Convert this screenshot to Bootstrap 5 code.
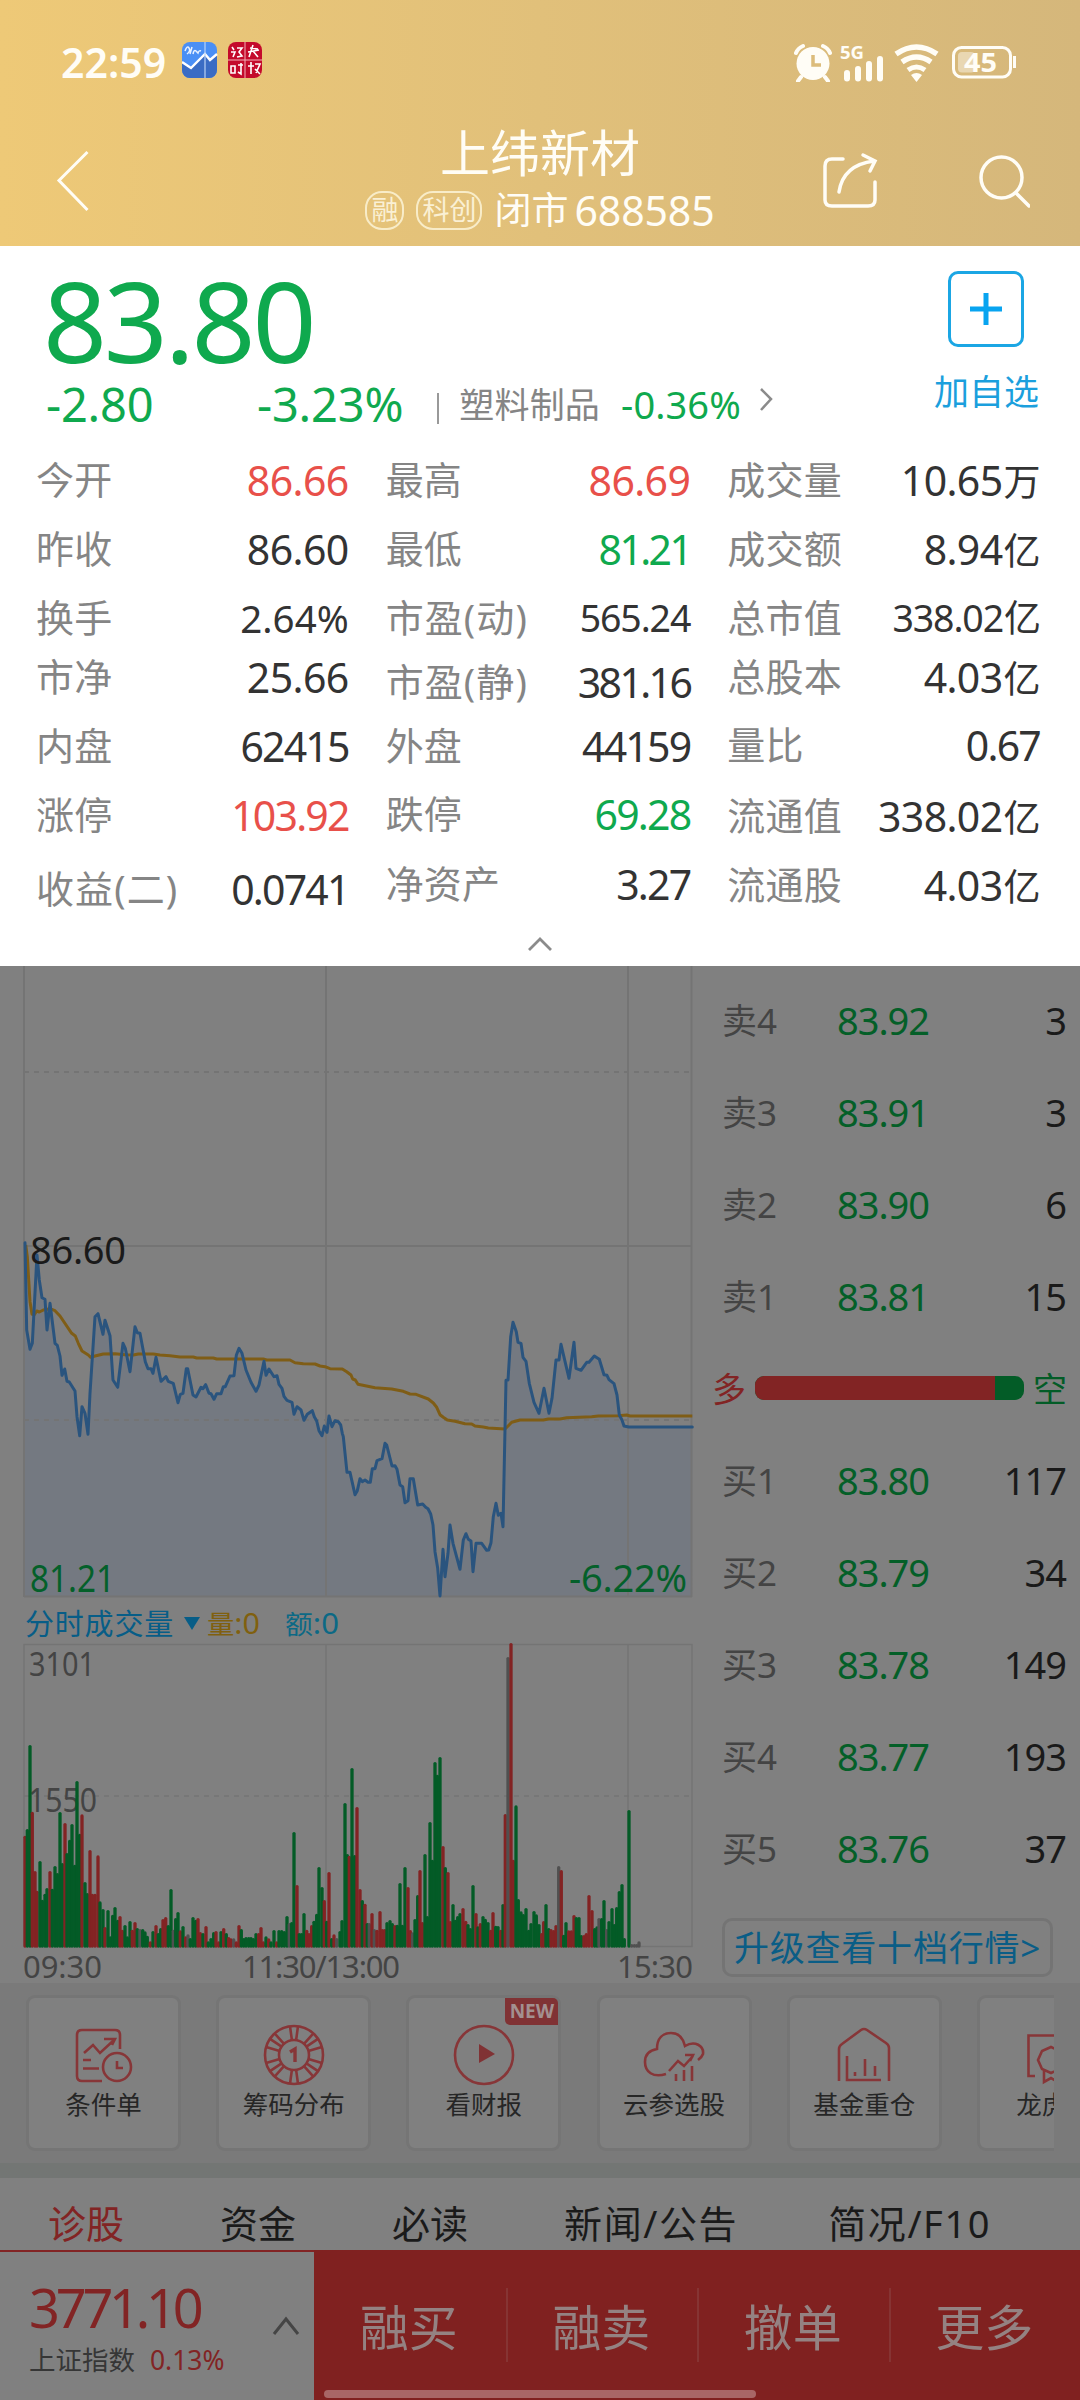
<!DOCTYPE html>
<html lang="zh-CN">
<head>
<meta charset="utf-8">
<meta name="viewport" content="width=device-width, initial-scale=1">
<title>上纬新材 688585</title>
<link rel="stylesheet" href="https://cdn.jsdelivr.net/npm/bootstrap@5.3.0/dist/css/bootstrap.min.css">
<style>
  body{width:1080px;height:2400px;overflow:hidden;background:#808080;font-family:"Noto Sans","Noto Sans CJK SC",sans-serif;line-height:1;color:#333}
  svg{display:block;flex:none}
  svg text{font-family:"Noto Sans","Noto Sans CJK SC",sans-serif}
  .hd{height:246px;background:linear-gradient(90deg,#eec977,#e1c07a 50%,#d5b77b);color:#fffdf6}
  .status-line{height:84px;padding:42px 60px 0 61px}
  .clock{font-size:41px;font-weight:600;letter-spacing:0}
  .nav-line{height:162px;padding:0 50px 0 56px}
  .nav-ico{margin-top:64px}
  .title-box{width:360px;margin-left:270px;padding-top:42px}
  .stock-name{font-size:50px;line-height:54px}
  .sub-line{height:42px;gap:12px;margin-top:9px}
  .tag-pill{border:2px solid #f8ecc8;border-radius:17px;height:39px;font-size:27px;line-height:34px;padding:0 4px;color:#faf0d4}
  .state{font-size:37px;line-height:40px}
  .code{font-size:41px;line-height:40px;letter-spacing:-.1px;margin-left:-6px}
  .quote{height:720px;background:#fff}
  .q-top{height:199px;padding:0 41px 0 46px}
  .big-price{font-size:112px;line-height:112px;height:112px;margin:18px 0 0 -3px;letter-spacing:-3.2px}
  .grn{color:#0fa94e}.rd{color:#e8504a}
  .chg{font-size:47px;letter-spacing:-.2px}
  .chg-first{width:211px}
  .chg-line{height:46px;margin-top:5px}
  .sector{font-size:35px;color:#858585;margin-left:20px;letter-spacing:.2px}
  .sector-chg{font-size:38px;margin-left:21px;letter-spacing:.1px}
  .bar-v{width:2px;height:31px;background:#999;margin:8px 0 0 34px}
  .add-box{width:76px;height:76px;border:3px solid #1ba6e4;border-radius:10px;margin-top:25px}
  .add-txt{font-size:35px;color:#1b9fdd;margin-top:27px}
  .grid3{padding:10px 40px 0 37px;gap:38px;height:473px}
  .c1{width:312px}.c2{width:304px}.c3{width:312px}
  .kv{height:50px;font-size:41px;letter-spacing:-.6px;white-space:nowrap}
  .kv span:first-child{font-size:38px;color:#858585;letter-spacing:.2px;padding-bottom:2px;margin-left:-1px}
  .kv .paren{letter-spacing:1.1px!important}
  .kv em{font-style:normal;font-size:37px;margin-left:1px}
  .kv .tight{font-size:37.5px;letter-spacing:-1.1px}
  .kv .tighter{letter-spacing:-1.8px}
  .kv .tightest{letter-spacing:-2.6px}
  .kv .mid{font-size:38.5px;letter-spacing:0}
  .kv+.kv{margin-top:19px}
  .c1 .kv:nth-child(4){margin-top:9px}.c1 .kv:nth-child(7){margin-top:24px}
  .c2 .kv:nth-child(4),.c2 .kv:nth-child(5){margin-top:14px}.c2 .kv:nth-child(6){margin-top:18px}.c2 .kv:nth-child(7){margin-top:20px}
  .c3 .kv:nth-child(4){margin-top:9px}.c3 .kv:nth-child(5){margin-top:18px}.c3 .kv:nth-child(6){margin-top:21px}
  .fold{padding-top:18px}
  .market{height:1017px}
  .chart-col{width:706px}
  .vol-head{height:44px;padding:3px 26px 0 25px;font-size:29px;color:#075d87}
  .vol-head .nm{letter-spacing:.8px}
  .tri{margin:0 7px 0 10px}
  .book{width:374px;padding:8px 13px 0 16px}
  .lv{height:92px;font-size:38px;color:#1a1a1a}
  .lv .lb{width:100px;font-size:35px;color:#444}
  .lv .pr{width:122px;color:#045f28;letter-spacing:-1px}
  .lv .qt{width:123px;letter-spacing:-1px;margin-left:-1px}
  .bs-row{height:92px;margin-left:-10px}
  .bs-row .side{font-size:34px;width:34px;flex:none;padding-top:2px}
  .bear{color:#035c27}
  .bs-bar{width:269px;height:24px;border-radius:9px;overflow:hidden;background:#035c27}
  .bs-bar div{width:240px;background:#822424}
  .up-btn{width:331px;height:59px;border:3px solid #747474;border-radius:10px;margin-top:24px;font-size:35px;color:#0a5d86;letter-spacing:.8px}
  .tools{height:180px;background:#7a7a7a;padding:12px 26px 0 26px}
  .tools-in{gap:35.2px;overflow:hidden}
  .tool{flex:none;width:155px;height:156px;border:3px solid #757575;border-radius:9px;background:#808080;font-size:25.5px;color:#262626}
  .tool svg{margin-top:26px}
  .tool .cap-t{margin-top:6px;white-space:nowrap}
  .new-tag{right:0;top:0;width:53px;height:27px;background:#803234;color:#a39090;font-size:19px;font-weight:700;border-radius:0 5px 0 5px;line-height:27px}
  .sep{height:15px;background:#737674}
  .tabs{height:72px;font-size:38px;color:#1a1a1a;padding:17px 0 0 48px;gap:96px;white-space:nowrap}
  .wide-t{letter-spacing:1.6px;margin-right:-6px}
  .dk-red{color:#822424}
  .ft{height:150px}
  .idx{width:315px;border-top:2px solid #822424;padding:0 14px 0 29px}
  .idx-v{font-size:54px;letter-spacing:-4.2px;line-height:54px;margin-top:28px}
  .idx-n{font-size:26.5px;line-height:30px;margin-top:11px;color:#363636;white-space:nowrap}
  .acts{background:#802120;color:#948282;font-size:49px}
  .act{width:191.5px;height:74px;padding:4px 2px 0 0}
  .act+.act{border-left:2px solid #863433}
  .home-bar{left:324px;top:2390px;width:432px;height:8px;border-radius:4px;background:#a86666}
</style>
</head>
<body>
<header class="hd">
  <div class="status-line d-flex align-items-start">
    <span class="clock">22:59</span>
    <svg class="ms-3 me-1" width="36" height="36" viewBox="0 0 36 36"><rect width="35" height="36" rx="8" fill="#4a8ff5"/><path d="M0 20 9 27 23 12 29 18 35 12V28a8 8 0 0 1-8 8H8a8 8 0 0 1-8-8Z" fill="#3a6cc4"/><path d="M0 20 9 26 23 12 28 18 35 12" fill="none" stroke="#fff" stroke-width="2.4"/><path d="M23 0V36" stroke="#b9d2f5" stroke-width="1.2"/><path d="M3 9q2-6 4-3t-2 6M8 12l2-7M11 12q1-5 3-3t2 2q1-3 3-2" fill="none" stroke="#e8f1ff" stroke-width="1.5"/></svg>
    <svg class="ms-1" width="36" height="36" viewBox="0 0 36 36"><rect x="2" width="34" height="36" rx="8" fill="#c40a2b"/><path d="M19 0V36M2 18H36" stroke="#f0b0b8" stroke-width="1"/><path d="M6 5l2 3M5 10h4l-2 5M11 6h5l-3 4 3 4-5 1M24 6l8 1M22 10l11-2M27 3l-4 12M27 9l5 6M5 24h4v7H5zM12 23h5M15 21v11l-3-2M22 24h6M25 20v12M29 22h5l-4 9M29 27l5 5" fill="none" stroke="#fff" stroke-width="1.6"/></svg>
    <div class="d-flex ms-auto">
      <svg width="226" height="40" viewBox="794 42 226 40" fill="none" stroke="#fffdf6"><circle cx="813" cy="63.500" r="16.500" fill="#fffdf6" stroke="none"/><path d="M796 53q2-5 7-7M830 53q-2-5-7-7M801 77l-3 4M825 77l3 4" stroke-width="4" stroke-linecap="round"/><path d="M813 55v10h8" stroke="#dcbc7b" stroke-width="3.500"/>
        <text x="840" y="59" font-size="17.500" font-weight="700" fill="#fffdf6" stroke="none" textLength="24" lengthAdjust="spacingAndGlyphs">5G</text>
        <path d="M847 73v5.500M858 69v9.500M869 64v14.500M880 59v19.500" stroke-width="6" stroke-linecap="round"/>
        <path d="M896 54q20.500-14 41 0" stroke-width="5.500"/><path d="M902 62q14.500-10 29 0" stroke-width="5.500"/><path d="M908 70q8.500-6 17 0" stroke-width="5"/><path d="M911 75q5.500-4 11 0l-5.500 7z" fill="#fffdf6" stroke="none"/>
        <rect x="953.500" y="47.500" width="57" height="29.500" rx="8" stroke-width="3"/><rect x="958" y="52" width="17" height="20.500" rx="4" fill="#fffdf6" opacity=".45" stroke="none"/><path d="M1014.500 56v12" stroke-width="3"/>
        <text x="964" y="72" font-size="26" font-weight="700" fill="#fffdf6" stroke="none" textLength="33" lengthAdjust="spacingAndGlyphs">45</text></svg>
    </div>
  </div>
  <div class="nav-line d-flex">
    <svg width="34" height="64" viewBox="56 151 34 64" class="nav-ico"><path d="M87.500 155 59 183.500 87.500 213" fill="none" stroke="#fffdf6" stroke-width="3"/></svg>
    <div class="title-box text-center me-auto flex-shrink-0">
      <div class="stock-name">上纬新材</div>
      <div class="sub-line d-flex align-items-center justify-content-center"><span class="tag-pill">融</span><span class="tag-pill">科创</span><span class="state">闭市</span><span class="code">688585</span></div>
    </div>
    <svg width="210" height="64" viewBox="820 151 210 64" class="nav-ico" fill="none" stroke="#fffdf6" stroke-width="3.500" stroke-linecap="round"><path d="M843 162H832q-7 0-7 7V203q0 6 7 6H868q7 0 7-6V185"/><path d="M839 195q4-27 35-31M863 158l12 6-5 10"/><circle cx="1001.500" cy="180.500" r="20.500"/><path d="M1016 196l13 13"/></svg>
  </div>
</header>

<section class="quote">
  <div class="q-top d-flex justify-content-between">
    <div>
      <div class="big-price grn">83.80</div>
      <div class="chg-line d-flex align-items-center">
        <span class="chg chg-first grn">-2.80</span><span class="chg grn">-3.23%</span><span class="bar-v"></span><span class="sector">塑料制品</span><span class="sector-chg grn">-0.36%</span>
        <svg class="ms-3 mb-2" width="20" height="28" viewBox="0 0 20 28"><path d="M4 3 14 13 4 24" fill="none" stroke="#8b8b8b" stroke-width="2.500"/></svg>
      </div>
    </div>
    <div class="d-flex flex-column align-items-center">
      <div class="add-box d-flex align-items-center justify-content-center"><svg width="34" height="34" viewBox="0 0 34 34"><path d="M17 1V33M1 17H33" stroke="#08a4f0" stroke-width="5"/></svg></div>
      <div class="add-txt">加自选</div>
    </div>
  </div>
  <div class="grid3 d-flex">
    <div class="c1">
      <div class="kv d-flex justify-content-between align-items-center"><span>今开</span><span class="rd">86.66</span></div>
      <div class="kv d-flex justify-content-between align-items-center"><span>昨收</span><span>86.60</span></div>
      <div class="kv d-flex justify-content-between align-items-center"><span>换手</span><span class="mid">2.64%</span></div>
      <div class="kv d-flex justify-content-between align-items-center"><span>市净</span><span>25.66</span></div>
      <div class="kv d-flex justify-content-between align-items-center"><span>内盘</span><span class="tighter">62415</span></div>
      <div class="kv d-flex justify-content-between align-items-center"><span>涨停</span><span class="rd tighter">103.92</span></div>
      <div class="kv d-flex justify-content-between align-items-center"><span class="paren">收益(二)</span><span class="tighter">0.0741</span></div>
    </div>
    <div class="c2">
      <div class="kv d-flex justify-content-between align-items-center"><span>最高</span><span class="rd">86.69</span></div>
      <div class="kv d-flex justify-content-between align-items-center"><span>最低</span><span class="grn tightest">81.21</span></div>
      <div class="kv d-flex justify-content-between align-items-center"><span class="paren">市盈(动)</span><span class="tight">565.24</span></div>
      <div class="kv d-flex justify-content-between align-items-center"><span class="paren">市盈(静)</span><span class="tightest">381.16</span></div>
      <div class="kv d-flex justify-content-between align-items-center"><span>外盘</span><span class="tighter">44159</span></div>
      <div class="kv d-flex justify-content-between align-items-center"><span>跌停</span><span class="grn tighter">69.28</span></div>
      <div class="kv d-flex justify-content-between align-items-center"><span>净资产</span><span class="tighter">3.27</span></div>
    </div>
    <div class="c3">
      <div class="kv d-flex justify-content-between align-items-center"><span>成交量</span><span>10.65<em>万</em></span></div>
      <div class="kv d-flex justify-content-between align-items-center"><span>成交额</span><span>8.94<em>亿</em></span></div>
      <div class="kv d-flex justify-content-between align-items-center"><span>总市值</span><span class="tight">338.02<em>亿</em></span></div>
      <div class="kv d-flex justify-content-between align-items-center"><span>总股本</span><span>4.03<em>亿</em></span></div>
      <div class="kv d-flex justify-content-between align-items-center"><span>量比</span><span class="tighter">0.67</span></div>
      <div class="kv d-flex justify-content-between align-items-center"><span>流通值</span><span>338.02<em>亿</em></span></div>
      <div class="kv d-flex justify-content-between align-items-center"><span>流通股</span><span>4.03<em>亿</em></span></div>
    </div>
  </div>
  <div class="fold d-flex justify-content-center"><svg width="26" height="16" viewBox="0 0 26 16"><path d="M2 14 13 3 24 14" fill="none" stroke="#8b8b8b" stroke-width="2.800"/></svg></div>
</section>

<main class="market d-flex">
  <div class="chart-col">
    <svg width="706" height="634" viewBox="0 966 706 634">
      <path id="area" fill="#747981"/>
      <g stroke="#747474" stroke-width="2" fill="none"><path d="M24 966V1597M326 966V1597M628 966V1597M691.500 966V1597M24 1246H692M24 1596.500H692"/><path d="M24 1072H692M24 1420H692" stroke-dasharray="5 5"/></g>
      <path id="avg" fill="none" stroke="#7f5d16" stroke-width="3" stroke-linejoin="round"/>
      <path id="price" fill="none" stroke="#2a547e" stroke-width="3" stroke-linejoin="round" stroke-linecap="round"/>
      <g font-size="38"><text x="30" y="1263.500" fill="#1a1a1a" textLength="96">86.60</text><g fill="#04602a"><text x="30" y="1591.500" textLength="85" lengthAdjust="spacingAndGlyphs">81.21</text><text x="569" y="1591.500" textLength="118">-6.22%</text></g></g>
    </svg>
    <div class="vol-head d-flex align-items-center">
      <span class="nm">分时成交量</span>
      <svg class="tri" width="16" height="14" viewBox="0 0 16 14"><path d="M0 0H16L8 13Z" fill="#075d87"/></svg>
      <svg width="150" height="34" viewBox="208 1607 150 34" font-size="29"><text x="208" y="1634" fill="#80600f" textLength="53" lengthAdjust="spacingAndGlyphs"><tspan font-size="26">量</tspan>:0</text><text x="286" y="1634" fill="#0c6985" textLength="54" lengthAdjust="spacingAndGlyphs"><tspan font-size="26">额</tspan>:0</text></svg>
    </div>
    <svg width="706" height="339" viewBox="0 1644 706 339" overflow="visible">
      <g stroke="#747474" stroke-width="1.500" fill="none"><path d="M24 1644.500H692V1946.500H24ZM326 1644V1946M628 1644V1946"/><path d="M24 1796H692" stroke-dasharray="5 5"/></g>
      <g fill="#444" font-size="32.500"><text x="29" y="1675.500" textLength="66" lengthAdjust="spacingAndGlyphs">3101</text><text x="28" y="1811.500" textLength="69" lengthAdjust="spacingAndGlyphs">1550</text></g>
      <g id="bars" stroke-width="3.300" stroke-linecap="round"></g>
      <g fill="#444" font-size="31"><text x="23" y="1978" textLength="79">09:30</text><text x="242" y="1978" textLength="158">11:30/13:00</text><text x="617" y="1978" textLength="76">15:30</text></g>
    </svg>
  </div>
  <aside class="book">
    <div class="lv d-flex align-items-center"><span class="lb">卖4</span><span class="pr text-center">83.92</span><span class="qt text-end">3</span></div>
    <div class="lv d-flex align-items-center"><span class="lb">卖3</span><span class="pr text-center">83.91</span><span class="qt text-end">3</span></div>
    <div class="lv d-flex align-items-center"><span class="lb">卖2</span><span class="pr text-center">83.90</span><span class="qt text-end">6</span></div>
    <div class="lv d-flex align-items-center"><span class="lb">卖1</span><span class="pr text-center">83.81</span><span class="qt text-end">15</span></div>
    <div class="bs-row d-flex align-items-center justify-content-between"><span class="side dk-red">多</span><div class="bs-bar d-flex"><div></div></div><span class="side bear">空</span></div>
    <div class="lv d-flex align-items-center"><span class="lb">买1</span><span class="pr text-center">83.80</span><span class="qt text-end">117</span></div>
    <div class="lv d-flex align-items-center"><span class="lb">买2</span><span class="pr text-center">83.79</span><span class="qt text-end">34</span></div>
    <div class="lv d-flex align-items-center"><span class="lb">买3</span><span class="pr text-center">83.78</span><span class="qt text-end">149</span></div>
    <div class="lv d-flex align-items-center"><span class="lb">买4</span><span class="pr text-center">83.77</span><span class="qt text-end">193</span></div>
    <div class="lv d-flex align-items-center"><span class="lb">买5</span><span class="pr text-center">83.76</span><span class="qt text-end">37</span></div>
    <div class="up-btn d-flex align-items-center justify-content-center text-nowrap">升级查看十档行情&gt;</div>
  </aside>
</main>

<section class="tools">
  <div class="tools-in d-flex">
    <div class="tool d-flex flex-column align-items-center"><svg width="60" height="62" viewBox="0 0 60 62" fill="none" stroke="#873638" stroke-width="2.600"><path d="M28 57H8q-5 0-5-5V11q0-5 5-5H41q5 0 5 5V25M10 29l9-8 7 8L40 16M30 15H41l-3 6M9 36h8M9 44.500h16"/><circle cx="43" cy="43" r="14"/><path d="M43 37v7h6"/></svg><div class="cap-t">条件单</div></div>
    <div class="tool d-flex flex-column align-items-center"><svg width="62" height="62" viewBox="-31 -31 62 62" fill="none" stroke="#873638" stroke-width="2.600"><circle r="29"/><circle r="15"/><path id="spokes"/><path d="M-4-3 1-6V7" stroke-width="3.400"/></svg><div class="cap-t">筹码分布</div></div>
    <div class="tool d-flex flex-column align-items-center position-relative"><span class="new-tag position-absolute text-center">NEW</span><svg width="62" height="62" viewBox="-31 -31 62 62"><circle r="29" fill="none" stroke="#873638" stroke-width="2.600"/><path d="M-5-11 11-1-5 8Z" fill="#803234"/></svg><div class="cap-t">看财报</div></div>
    <div class="tool d-flex flex-column align-items-center"><svg width="62" height="62" viewBox="0 0 62 62" fill="none" stroke="#873638" stroke-width="2.600"><path d="M23 50C10 54 2 48 2 38Q2 27 14 25C14 14 20 9 28 9Q39 9 42 22C52 16 61 22 60 30Q59 33 55 36"/><path d="M26 47l9-10 6 5 9-10M42 31H50l-3 6M33 50v7M41 46v11M49 42v15"/></svg><div class="cap-t">云参选股</div></div>
    <div class="tool d-flex flex-column align-items-center"><svg width="62" height="62" viewBox="0 0 62 62" fill="none" stroke="#873638" stroke-width="2.600"><path d="M6 57V25q0-3 3-5L28 6q3-2 6 0L53 19q3 2 3 5V57M14 32V56H48M22 48v4M32 35V52M42 42v10"/></svg><div class="cap-t">基金重仓</div></div>
    <div class="tool d-flex flex-column align-items-center"><svg width="62" height="62" viewBox="0 0 62 62" fill="none" stroke="#873638" stroke-width="2.600"><path d="M12 51H5V11H57V51H50M26 23l7 3 7 7-3 8-5 4-7-2-8 2-5-6-2-5 3-8 7-1zM19 44V58l7-4 7 4V44" visibility="hidden"/><path d="M12 52H5.500V11.500H56V52H50M28 23l9 4 3 9-3 9-9 4-9-4-4-9 4-9ZM21 46V58l7-4 7 4V46"/></svg><div class="cap-t">龙虎榜</div></div>
  </div>
</section>
<div class="sep"></div>
<nav class="tabs d-flex align-items-center">
  <span class="dk-red">诊股</span><span>资金</span><span>必读</span><span class="wide-t">新闻/公告</span><span class="wide-t">简况/F10</span>
</nav>
<footer class="ft d-flex">
  <div class="idx d-flex align-items-center justify-content-between">
    <div class="align-self-start"><div class="idx-v dk-red">3771.10</div><div class="idx-n">上证指数 <span class="dk-red ms-2">0.13%</span></div></div>
    <svg width="28" height="22" viewBox="0 0 28 22"><path d="M2 19 14 4 26 19" fill="none" stroke="#454545" stroke-width="3"/></svg>
  </div>
  <div class="acts d-flex align-items-center flex-grow-1">
    <div class="act d-flex align-items-center justify-content-center">融买</div><div class="act d-flex align-items-center justify-content-center">融卖</div><div class="act d-flex align-items-center justify-content-center">撤单</div><div class="act d-flex align-items-center justify-content-center">更多</div>
  </div>
</footer>
<div class="home-bar position-absolute"></div>

<script src="https://cdn.jsdelivr.net/npm/bootstrap@5.3.0/dist/js/bootstrap.bundle.min.js"></script>
<script>
  // Intraday samples in thirds of a pixel; the afternoon series is offset by 1020.
  const am = "75,68 80,330 90,388 97,370 111,105 118,180 126,233 135,238 141,330 150,250 165,370 172,376 180,408 186,466 194,447 201,484 208,486 225,513 231,590 239,647 246,560 255,580 264,643 270,520 285,290 294,281 309,343 315,301 330,347 339,480 353,502 369,370 376,385 390,455 405,320 412,338 420,340 436,425 444,446 453,446 459,460 468,412 483,484 498,470 505,484 520,490 534,548 541,523 549,520 559,446 563,446 579,525 588,531 603,502 609,506 617,494 627,520 633,521 642,538 650,521 663,521 670,500 676,500 690,468 702,467 709,406 717,385 726,400 738,450 753,487 768,514 777,495 792,424 798,466 807,447 822,470 831,467 837,493 846,505 852,529 861,541 876,547 882,583 891,560 903,570 912,601 922,583 937,572 943,590 950,603 957,632 966,647 973,618 981,637 987,588 996,620 1005,602 1015,605 1022,615 1027,640";
  const pm = "10,650 21,757 30,757 45,824 52,812 60,776 67,785 75,780 84,787 91,787 97,746 105,746 111,722 126,716 135,670 140,675 156,738 165,737 171,748 180,795 188,800 195,848 204,842 210,776 220,776 233,855 248,852 257,862 264,866 272,882 279,915 285,995 293,1045 300,1128 309,988 315,1070 324,1000 330,915 339,970 360,1048 370,960 378,941 385,958 393,963 399,1055 408,970 425,970 440,991 446,990 453,968 460,890 468,850 475,886 483,880 489,920 498,481 504,480 512,350 519,307 529,335 534,367 543,370 549,412 558,424 568,490 582,547 597,580 612,505 627,580 636,535 648,420 657,420 663,373 687,475 702,367 708,445 723,451 740,427 747,427 763,408 778,418 792,464 801,466 807,479 822,491 831,525 838,585 846,600 852,618 866,621 1057,621";
  const avgAm = "77,75 82,110 90,245 96,283 103,284 110,273 118,276 130,270 150,266 165,272 180,288 215,340 226,348 235,370 246,393 265,405 272,412 285,408 310,402 345,401 375,404 400,405 415,402 460,402 480,405 510,407 540,411 580,411 590,414 640,414 650,417 790,417 800,420 870,420 885,428 910,431 945,432 960,438 975,440 990,446 1027,447";
  const avgPm = "20,455 33,465 38,477 46,480 54,493 105,503 155,507 190,514 210,522 228,523 265,537 280,549 290,562 300,584 310,592 322,600 345,604 375,611 395,612 405,618 430,621 445,624 495,627 505,617 515,607 540,600 610,600 625,597 660,597 680,593 755,590 775,588 835,587 860,585 870,588 1057,588";
  const pts = (s, off) => s.split(" ").map(p => { const [x, y] = p.split(",").map(Number); return ((x + off) / 3).toFixed(1) + " " + (1220 + y / 3).toFixed(1); });
  const line = (a, b) => "M" + pts(a, 0).concat(pts(b, 1020)).join("L");
  const priceD = line(am, pm);
  document.getElementById("price").setAttribute("d", priceD);
  document.getElementById("area").setAttribute("d", priceD + "L692 1596L25 1596Z");
  document.getElementById("avg").setAttribute("d", line(avgAm, avgPm));

  // Volume bars: x, direction (r up, g down, k flat), top.
  const volAm = "75r738,82g718,90g466,97r666,105r844,111r903,120g814,127g930,135g912,141g895,150r844,157g897,165g829,172g850,180g667,187g820,195r700,201g790,209g750,216g703,224g825,231g574,239g732,246r674,255g877,262g910,270r781,277r912,285r912,294r797,300g935,309g958,315r1012,324g961,331g1040,338g975,345g952,353g990,360r979,367r1020,375g1006,382g1040,390g994,397r1020,405r997,412g1015,420k1018,428g1018,435g1025,442g1038,451r1055,459g1024,468r1006,475g1030,482g1015,489r988,497r982,505g1006,513g898,520k1020,527g985,534g967,541r1022,549g1009,557r1040,564k1034,571g1045,579g982,587g990,594r985,601r1027,609g1030,618r1009,625g1055,633g1045,641g1027,648r1024,656r1055,663g1024,671r1015,679g1030,686r1042,693r1046,701k1046,709r1055,717r1006,724g1018,731g1045,738g1042,746g1042,753g1042,760g1045,768g1030,776r1030,783r1012,790r1055,798g1040,806r1046,813g1055,822g1021,830r1055,837g1021,845g1021,853g1024,861g979,868k1000,875g997,882g727,891r886,898g1030,905g1030,912g970,920r1020,927r1030,935r1006,942g993,950g972,957g832,966g892,973r931,980g993,987r847,995g1045,1002r1034,1010k1045,1020g1024,1026g991,1035g640,1042g793,1048r798,1056g535,1064g796,1071r652,1080r898";
  const volPm = "67g931,75r942,82g1000,88k1000,96r970,103k1018,111r1020,120r964,127r1018,134r1018,141g997,150g991,157g1000,165r1006,172g1005,180g880,187g1005,195g832,204r892,211r1021,218k1028,225g988,233g916,240r841,247r997,255g793,262g979,270g697,277g810,285g517,292g555,300g502,309r769,316g832,324r847,331r994,339g943,346g990,353g979,360g970,369r955,377r993,384g1003,391g1015,399g886,408r970,414g1010,421r1000,429g979,436g987,444g997,452r1020,459r967,467g1008,474g1009,482r1020,489g943,496r673,504k202,513r160,520r810,528g647,535g928,543g965,550g973,558g955,566g1020,573g1000,582g964,589g974,597g1003,605r1030,611r994,618g943,626g1015,633r1018,641r1021,648r1006,656k829,664r841,671g1035,678g997,686r1022,694r1022,702r976,709g982,717g982,724g1036,732r1036,739r1030,747r916,756r961,764g1015,771g1010,777k985,785g985,792g931,800k1018,807g994,816g955,823g1003,830g952,838g904,846g883,853g1045,867g661,875k1063,883k1063,890k1063,897k1055";
  const tone = { r: "#832323", g: "#035b26", k: "#505050" };
  const bars = (s, off) => s.split(",").map(b => { const [, x, c, y] = b.match(/(\d+)([rgk])(\d+)/); const px = ((+x + off) / 3).toFixed(1); return `<path d="M${px} ${(1591.300 + y / 3).toFixed(1)}V1946" stroke="${tone[c]}"/>`; }).join("");
  document.getElementById("bars").innerHTML = bars(volAm, 0) + bars(volPm, 1020);

  // Chip icon: paired ticks around the ring.
  document.getElementById("spokes").setAttribute("d", [82, 98, 34, 48, 344, 16, 164, 196, 132, 146, 214, 228, 262, 278, 312, 326].map(a => { const r = a * Math.PI / 180, c = Math.cos(r), s = Math.sin(r); return `M${(15 * c).toFixed(1)} ${(15 * s).toFixed(1)}L${(29 * c).toFixed(1)} ${(29 * s).toFixed(1)}`; }).join(""));
</script>
</body>
</html>
